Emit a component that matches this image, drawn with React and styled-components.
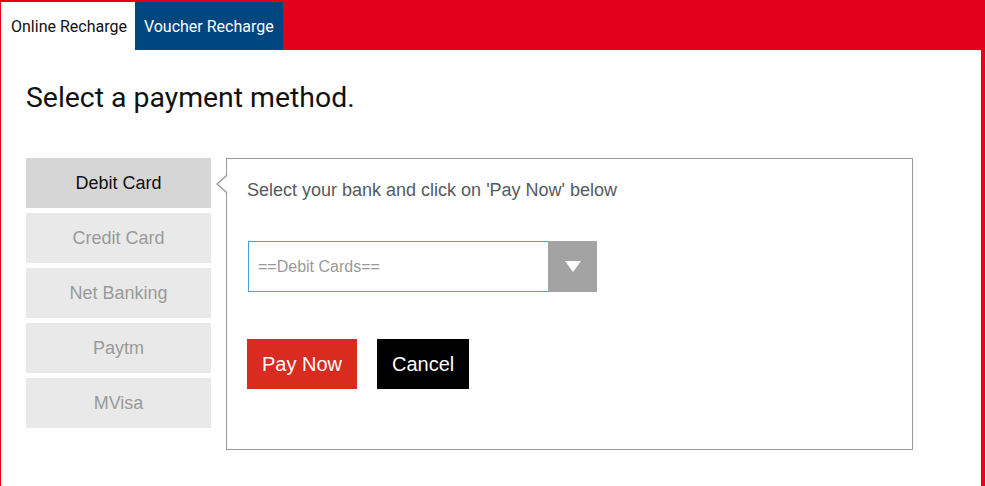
import React, { useState } from "react";
import styled, { createGlobalStyle } from "styled-components";

const GlobalStyle = createGlobalStyle`
  html, body {
    margin: 0;
    padding: 0;
    background: #ffffff;
  }
`;

const Frame = styled.div`
  width: 985px;
  height: 486px;
  box-sizing: border-box;
  background: #e3001b;
  padding: 2px 4px 0 1px;
  display: flex;
  flex-direction: column;
  overflow: hidden;
`;

const TabBar = styled.div`
  display: flex;
  height: 48px;
  flex-shrink: 0;
`;

const Tab = styled.div`
  display: flex;
  align-items: center;
  padding: ${(p) => (p.$active ? "1px 8px 0 10px" : "1px 9px 0")};
  font-family: Roboto, "Liberation Sans", sans-serif;
  font-size: 16px;
  background: ${(p) => (p.$active ? "#ffffff" : "#00467f")};
  color: ${(p) => (p.$active ? "#111111" : "#ffffff")};
  cursor: pointer;
`;

const Content = styled.div`
  flex: 1;
  background: #ffffff;
  padding: 32px 0 0 25px;
`;

const Heading = styled.h1`
  margin: 0;
  font-family: Roboto, "Liberation Sans", sans-serif;
  font-weight: 400;
  font-size: 28.4px;
  line-height: 32px;
  color: #111111;
`;

const Body = styled.div`
  display: flex;
  gap: 15px;
  margin-top: 44px;
`;

const Menu = styled.div`
  width: 185px;
  display: flex;
  flex-direction: column;
  gap: 5px;
`;

const MenuItem = styled.div`
  height: 50px;
  display: flex;
  align-items: center;
  justify-content: center;
  font-family: "Liberation Sans", Arial, sans-serif;
  font-size: 18px;
  background: ${(p) => (p.$active ? "#d6d6d6" : "#e9e9e9")};
  color: ${(p) => (p.$active ? "#111111" : "#9a9a9a")};
  cursor: pointer;
`;

const Panel = styled.div`
  position: relative;
  width: 687px;
  height: 292px;
  box-sizing: border-box;
  border: 1px solid #9a9a9a;
  padding: 21px 20px;

  &::before,
  &::after {
    content: "";
    position: absolute;
    top: 16px;
    border-style: solid;
    border-color: transparent;
  }
  &::before {
    left: -11px;
    border-width: 9px 10px 9px 0;
    border-right-color: #9a9a9a;
  }
  &::after {
    left: -9px;
    top: 17px;
    border-width: 8px 9px 8px 0;
    border-right-color: #ffffff;
  }
`;

const Hint = styled.div`
  font-family: "Liberation Sans", Arial, sans-serif;
  font-size: 18px;
  line-height: 20px;
  color: #555a60;
`;

const SelectBox = styled.div`
  margin-top: 41px;
  margin-left: 1px;
  width: 349px;
  height: 51px;
  box-sizing: border-box;
  border: 1px solid #4aa3df;
  display: flex;
  align-items: stretch;
  cursor: pointer;
`;

const SelectText = styled.div`
  flex: 1;
  display: flex;
  align-items: center;
  padding-left: 9px;
  font-family: "Liberation Sans", Arial, sans-serif;
  font-size: 16px;
  color: #9a9a9a;
`;

const SelectArrow = styled.div`
  width: 49px;
  margin: -1px -1px -1px 0;
  background: #a3a3a3;
  display: flex;
  align-items: center;
  justify-content: center;

  &::after {
    content: "";
    border-style: solid;
    border-width: 11px 8px 0 8px;
    border-color: #ffffff transparent transparent transparent;
  }
`;

const Actions = styled.div`
  display: flex;
  gap: 20px;
  margin-top: 47px;
`;

const Button = styled.button`
  height: 50px;
  padding: 0 15px;
  border: none;
  font-family: "Liberation Sans", Arial, sans-serif;
  font-size: 20px;
  color: #ffffff;
  background: ${(p) => (p.$variant === "primary" ? "#d92b20" : "#000000")};
  cursor: pointer;
`;

const methods = ["Debit Card", "Credit Card", "Net Banking", "Paytm", "MVisa"];

export default function App() {
  const [tab, setTab] = useState("online");
  const [method, setMethod] = useState("Debit Card");

  return (
    <>
      <GlobalStyle />
      <Frame>
        <TabBar>
          <Tab $active={tab === "online"} onClick={() => setTab("online")}>
            Online Recharge
          </Tab>
          <Tab $active={tab === "voucher"} onClick={() => setTab("voucher")}>
            Voucher Recharge
          </Tab>
        </TabBar>
        <Content>
          <Heading>Select a payment method.</Heading>
          <Body>
            <Menu>
              {methods.map((m) => (
                <MenuItem key={m} $active={m === method} onClick={() => setMethod(m)}>
                  {m}
                </MenuItem>
              ))}
            </Menu>
            <Panel>
              <Hint>Select your bank and click on 'Pay Now' below</Hint>
              <SelectBox>
                <SelectText>==Debit Cards==</SelectText>
                <SelectArrow />
              </SelectBox>
              <Actions>
                <Button $variant="primary">Pay Now</Button>
                <Button>Cancel</Button>
              </Actions>
            </Panel>
          </Body>
        </Content>
      </Frame>
    </>
  );
}
